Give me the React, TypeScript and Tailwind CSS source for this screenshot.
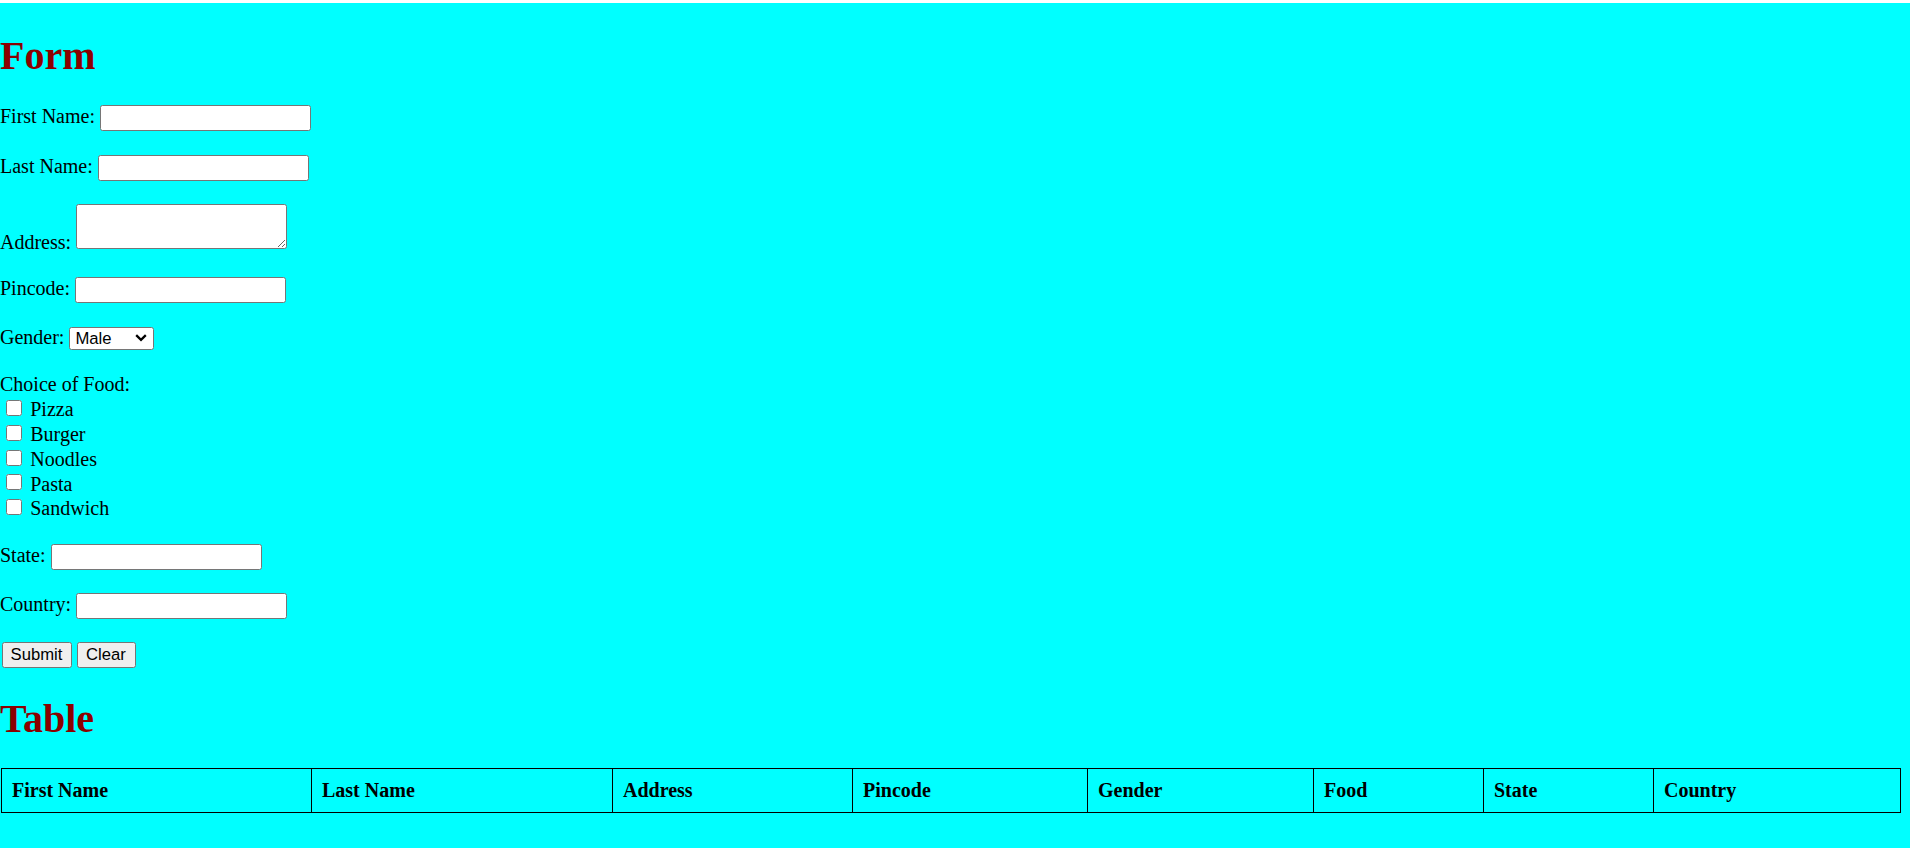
import React from 'react'

const serif = "font-['Liberation_Serif','Times_New_Roman',serif]"
const sans = "font-['Liberation_Sans',Arial,sans-serif]"

const textInput = `w-[211px] h-[26px] rounded-[2.5px] border border-[#767676] bg-white px-[2.5px] py-[1.25px] text-[16.67px] leading-[normal] text-black ${sans}`

const foods = ['Pizza', 'Burger', 'Noodles', 'Pasta', 'Sandwich']

const columns = [
    { label: 'First Name', width: 'w-[310px]' },
    { label: 'Last Name', width: 'w-[301px]' },
    { label: 'Address', width: 'w-[240px]' },
    { label: 'Pincode', width: 'w-[235px]' },
    { label: 'Gender', width: 'w-[226px]' },
    { label: 'Food', width: 'w-[170px]' },
    { label: 'State', width: 'w-[170px]' },
    { label: 'Country', width: 'w-[247px]' },
]

function Chevron() {
    return (
        <svg width="12" height="8" viewBox="0 0 12 8" className="pointer-events-none absolute right-[7px] top-[8px]">
            <path d="M1.2 1.2 L6 5.8 L10.8 1.2" fill="none" stroke="#000" strokeWidth="2.3" />
        </svg>
    )
}

export default function App() {
    return (
        <div className={`min-h-screen border-t-[3px] border-white bg-[#00ffff] text-[20px] leading-[normal] text-black ${serif}`}>
            <h1 className="mt-[28.5px] mb-[26.8px] text-[40px] font-bold leading-[normal] text-[#8b0000]">Form</h1>

            <form onSubmit={(e) => e.preventDefault()}>
                <p className="my-[23px]">
                    First Name: <input type="text" className={textInput} />
                </p>
                <p className="my-[23.5px]">
                    Last Name: <input type="text" className={textInput} />
                </p>
                <p className="my-[23px]">
                    Address:{' '}
                    <textarea
                        className={`h-[45px] w-[211px] resize rounded-[2.5px] border border-[#767676] bg-white p-[2.5px] align-baseline text-[16.67px] leading-[normal] text-black font-['Liberation_Mono',monospace]`}
                    />
                </p>
                <p className="my-[23px]">
                    Pincode: <input type="text" className={textInput} />
                </p>
                <p className="my-[23px]">
                    Gender:{' '}
                    <span className="relative inline-block">
                        <select
                            defaultValue="Male"
                            className={`h-[23px] w-[85px] appearance-none rounded-[2.5px] border border-[#767676] bg-white pl-[5px] text-[16.67px] leading-[normal] text-black ${sans}`}
                        >
                            <option>Male</option>
                            <option>Female</option>
                            <option>Other</option>
                        </select>
                        <Chevron />
                    </span>
                </p>
                <p className="mt-[22px] mb-[23px] pb-[1px]">
                    Choice of Food:
                    {foods.map((food) => (
                        <React.Fragment key={food}>
                            <br />
                            <input type="checkbox" className="my-[3.75px] ml-[5.5px] mr-[3.75px] h-4 w-4 align-baseline" /> {food}
                        </React.Fragment>
                    ))}
                </p>
                <p className="my-[23px]">
                    State: <input type="text" className={textInput} />
                </p>
                <p className="my-[23px]">
                    Country: <input type="text" className={textInput} />
                </p>
                <div className="pl-[1.5px]">
                    <button
                        type="submit"
                        className={`h-[26px] w-[70px] rounded-[2.5px] border border-[#767676] bg-[#efefef] text-[16.67px] leading-[normal] text-black ${sans}`}
                    >
                        Submit
                    </button>{' '}
                    <button
                        type="reset"
                        className={`h-[26px] w-[59px] rounded-[2.5px] border border-[#767676] bg-[#efefef] text-[16.67px] leading-[normal] text-black ${sans}`}
                    >
                        Clear
                    </button>
                </div>
            </form>

            <h1 className="mt-[27px] mb-[25.8px] text-[40px] font-bold leading-[normal] text-[#8b0000]">Table</h1>

            <table className="ml-px w-[1900px] table-fixed border-collapse border border-black">
                <colgroup>
                    {columns.map((c) => (
                        <col key={c.label} className={c.width} />
                    ))}
                </colgroup>
                <thead>
                    <tr>
                        {columns.map((c) => (
                            <th key={c.label} className="border border-black px-[10px] py-[10px] text-left font-bold">
                                {c.label}
                            </th>
                        ))}
                    </tr>
                </thead>
                <tbody></tbody>
            </table>
        </div>
    )
}
